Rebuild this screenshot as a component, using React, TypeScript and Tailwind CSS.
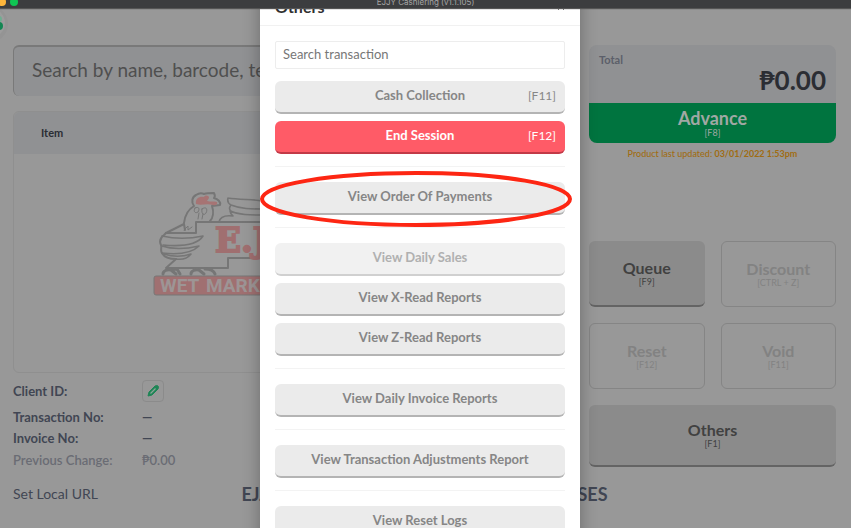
import React from "react";

type ModalItem = { label: string; shortcut?: string; tone?: "danger" | "muted" };

const groups: ModalItem[][] = [
  [
    { label: "Cash Collection", shortcut: "[F11]" },
    { label: "End Session", shortcut: "[F12]", tone: "danger" },
  ],
  [{ label: "View Order Of Payments" }],
  [
    { label: "View Daily Sales", tone: "muted" },
    { label: "View X-Read Reports" },
    { label: "View Z-Read Reports" },
  ],
  [{ label: "View Daily Invoice Reports" }],
  [{ label: "View Transaction Adjustments Report" }],
  [{ label: "View Reset Logs" }],
];

function TitleBar() {
  return (
    <header className="relative z-20 flex h-2 shrink-0 justify-center bg-[#3c3d3f] shadow-[0_1px_1px_#555]">
      <svg className="absolute left-0 top-0" width="24" height="8" aria-hidden="true">
        <circle cx="2" cy="2" r="4" fill="#fdb53b" />
        <circle cx="14" cy="2" r="4" fill="#0fc653" />
      </svg>
      <h1 className="-mt-1 font-['Inter','Liberation_Sans',sans-serif] text-[8px] leading-3 text-[#a6a6a6]">
        EJJY Cashiering (v1.1.105)
      </h1>
    </header>
  );
}

function Watermark() {
  return (
    <svg width="286" height="110" viewBox="150 188 286 110" aria-hidden="true">
      <g fill="none" stroke="#767676" strokeWidth="2" strokeLinejoin="round" strokeLinecap="round">
        <path d="M184 223c1-9 5-14 10-17-3-4-2-9 2-11 3-2 6-2 8-1 3-1 6-1 10-1 1 2 1 4 0 5 4 1 7 4 6 7l-8 1c2 6 1 12-2 15" />
        <path d="M196 222h244v36H228v10h-62l10-9c-6 0-12-2-14-6-2-3 0-5-1-8-2-4-1-7 3-10l2-2h30z" />
        <path d="M166 233l18-9 1 6" />
        <path d="M162 236c13 3 27 3 41 0-5 8-18 11-40 9" strokeWidth="1.6" />
        <path d="M162 246c12 4 24 3 37 0-7 7-19 9-37 7" strokeWidth="1.6" />
        <path d="M164 254c9 3 18 3 27 0-4 5-9 6-15 5" strokeWidth="1.6" />
        <path d="M195 208c4-2 5 1 3 4-3 2-5-1-3-4zM202 209c4-3 6 0 4 4-2 3-5 1-4-4zM199 213l-1 6M203 214l-1 5M184 230l4-4v4l4-3" strokeWidth="1" />
        <path d="M228 198c12 2 26 1 34 3v21h-43c1-5 6-7 14-6-2-2-3-3-3-5 9 4 20 4 32 4M228 198c-1 4 1 6 3 7-2 3-2 4 0 6M231 205c10 4 20 4 31 4" strokeWidth="1.6" />
        <path d="M163 274c0-3 4-5 8-4l5 4M170 270l7-1 3 5M191 274c0-3 4-5 8-4l5 4M205 269c5 0 9 2 10 5" strokeWidth="3" />
      </g>
      <path d="M196 204c-1-6 4-8 8-7 1-2 5-2 5 1l-2 3c4 1 7 0 10 1 1 2-1 4-4 3-7-2-11 1-17-1z" fill="#a67474" />
      <text
        x="215"
        y="252"
        fill="#a06f70"
        stroke="#a06f70"
        strokeWidth="2"
        fontFamily="'DejaVu Serif', 'Liberation Serif', serif"
        fontWeight="700"
        fontSize="34"
      >
        E.J
      </text>
      <rect x="154" y="276" width="278" height="19" rx="2" fill="#a07071" stroke="#777" />
      <g fill="#9d9595" fontFamily="'Roboto', 'Liberation Sans', sans-serif" fontWeight="700" fontSize="19">
        <text x="160" y="292">WET</text>
        <text x="206" y="292">MARKET</text>
      </g>
    </svg>
  );
}

function PadButton({ label, shortcut, off, wide }: { label: string; shortcut: string; off?: boolean; wide?: boolean }) {
  return (
    <button
      type="button"
      disabled={off}
      className={
        "flex flex-col items-center justify-center rounded-md " +
        (wide ? "col-span-2 h-[62px] " : "h-[66px] ") +
        (off
          ? "border border-[#858585] bg-[#989898] pb-px text-[#828282]"
          : "border-b-2 border-[#646464] bg-[#8b8b8b] text-[#414141]")
      }
    >
      <span className="text-base leading-[18px] font-bold">{label}</span>
      <span className="text-[9px] leading-[10px]">{shortcut}</span>
    </button>
  );
}

function Details() {
  return (
    <dl className="grid grid-cols-[129px_1fr] items-center text-[13px] font-bold text-[#414653]">
      <dt className="leading-9">Client ID:</dt>
      <dd>
        <button
          type="button"
          aria-label="Edit client ID"
          className="flex size-[22px] items-center justify-center rounded-sm border border-[#8b8b8b]"
        >
          <svg width="14" height="14" viewBox="0 0 14 14" aria-hidden="true">
            <path d="M2 12l1-4 6-6q2-1 3 0t0 3l-6 6z" fill="#1f8556" stroke="#1f8556" strokeLinejoin="round" />
            <path d="M4.500 9.500l5-5" stroke="#8ca397" strokeWidth="1.200" />
          </svg>
        </button>
      </dd>
      <dt className="leading-4">Transaction No:</dt>
      <dd className="leading-4">—</dd>
      <dt className="leading-[27px]">Invoice No:</dt>
      <dd className="leading-[27px]">—</dd>
      <dt className="leading-4 font-semibold text-[#6a6c74]">Previous Change:</dt>
      <dd className="leading-4 font-semibold text-[#6a6c74]">₱0.00</dd>
    </dl>
  );
}

function Modal() {
  return (
    <div className="absolute inset-0 z-10 flex items-start justify-center overflow-hidden pr-[11px]">
      <section
        role="dialog"
        aria-label="Others"
        className="-mt-3 w-80 bg-white pb-8 shadow-[0_0_16px_rgba(0,0,0,0.3)]"
      >
        <div className="flex h-[38px] items-center justify-between border-b border-[#f1f1f1] px-[15px]">
          <h2 className="text-base leading-5 font-bold text-[#303030]">Others</h2>
          <button type="button" aria-label="Close">
            <svg width="8" height="8" viewBox="0 0 8 8" stroke="#777" aria-hidden="true">
              <path d="M1 1l6 6M7 1l-6 6" />
            </svg>
          </button>
        </div>
        <div className="px-[15px] pt-[15px]">
          <input
            type="text"
            aria-label="Search transaction"
            placeholder="Search transaction"
            className="mb-3 block h-7 w-full rounded-xs border border-[#ededed] px-[7px] pb-[2px] text-[13px] text-[#555] outline-none placeholder:text-[#777]"
          />
          {groups.map((group, i) => (
            <div
              key={group[0].label}
              className={"flex flex-col gap-[7px] " + (i > 0 ? "mt-3 border-t border-[#f3f3f3] pt-[15px]" : "")}
            >
              {group.map((item) => (
                <button
                  key={item.label}
                  type="button"
                  className={
                    "grid h-[33px] grid-cols-[1fr_auto_1fr] items-center rounded-md border-b-2 px-[9px] pb-[2px] text-[13px] " +
                    (item.tone === "danger"
                      ? "border-[#c23a47] bg-[#ff5b67] text-white"
                      : item.tone === "muted"
                        ? "border-[#d0d0d0] bg-[#f1f1f1] text-[#b0b0b0]"
                        : "border-[#b4b4b4] bg-[#ebebeb] text-[#868686]")
                  }
                >
                  <span className="col-start-2 font-bold whitespace-nowrap">{item.label}</span>
                  {item.shortcut && <span className="text-right text-xs">{item.shortcut}</span>}
                </button>
              ))}
            </div>
          ))}
        </div>
      </section>
    </div>
  );
}

export default function App() {
  return (
    <div className="relative flex h-screen flex-col overflow-hidden bg-[#989898] font-['Lato','Noto_Sans',sans-serif]">
      <TitleBar />
      <svg className="absolute left-0 top-2" width="30" height="44" viewBox="0 8 30 44" aria-hidden="true">
        <circle cx="-10" cy="24" r="18" fill="#949494" />
        <circle cx="-10" cy="23" r="15" fill="#9c9c9c" />
        <circle cx="-1" cy="26" r="4" fill="#138653" />
        <circle cx="-1" cy="19" r="3" fill="#6fae91" />
      </svg>
      <main className="grid grid-cols-[1fr_247px] gap-4 pr-[15px] pl-[13px] pt-[37px]">
        <div>
          <input
            type="text"
            aria-label="Search products"
            placeholder="Search by name, barcode, text code"
            className="block h-[51px] w-full rounded-md border-t-2 border-l border-[#797979] bg-[#909193] px-[18px] pb-1 text-[19px] text-[#454545] outline-none placeholder:text-[#4f4f4f]"
          />
          <section className="mt-[15px] h-[262px] rounded-md border border-[#8f8f8f]">
            <div className="flex h-[42px] items-center rounded-t-md bg-[#909193] pl-[27px] text-[11px] font-bold text-[#2b2d33]">
              Item
            </div>
            <div className="flex h-[178px] items-center justify-center">
              <Watermark />
            </div>
          </section>
          <Details />
        </div>
        <aside>
          <section className="overflow-hidden rounded-lg bg-[#909193]">
            <div className="h-[58px] px-[10px] pt-2">
              <p className="text-[11px] leading-[14px] font-bold text-[#5c5f6a]">Total</p>
              <p className="text-right text-[26px] leading-[26px] font-bold text-[#2b2d33]">₱0.00</p>
            </div>
            <button
              type="button"
              className="flex h-10 w-full flex-col items-center justify-center bg-[#00743f] text-[#a0a8a4]"
            >
              <span className="text-lg leading-5 font-bold">Advance</span>
              <span className="text-[9px] leading-[10px]">[F8]</span>
            </button>
          </section>
          <p className="mt-1 text-center text-[9px] leading-[14px] font-medium text-[#a06c12]">
            Product last updated: <b>03/01/2022 1:53pm</b>
          </p>
          <div className="mt-20 grid grid-cols-2 gap-4">
            <PadButton label="Queue" shortcut="[F9]" />
            <PadButton label="Discount" shortcut="[CTRL + Z]" off />
            <PadButton label="Reset" shortcut="[F12]" off />
            <PadButton label="Void" shortcut="[F11]" off />
            <PadButton label="Others" shortcut="[F1]" wide />
          </div>
        </aside>
      </main>
      <footer className="mt-3 grid grid-cols-[1fr_366px_1fr] items-center pr-[15px] pl-[13px]">
        <a href="#local-url" className="text-sm leading-7 text-[#414653]">
          Set Local URL
        </a>
        <p className="flex justify-between text-lg leading-7 font-bold text-[#414653]">
          <span>EJJY</span>
          <span>ENTERPRISES</span>
        </p>
      </footer>
      <Modal />
      <svg className="absolute inset-x-0 top-[168px] z-30 mx-auto pr-5" width="340" height="62" viewBox="0 0 320 62" aria-hidden="true">
        <ellipse cx="160" cy="31" rx="154" ry="26" fill="none" stroke="#fd2613" strokeWidth="4" />
      </svg>
    </div>
  );
}
